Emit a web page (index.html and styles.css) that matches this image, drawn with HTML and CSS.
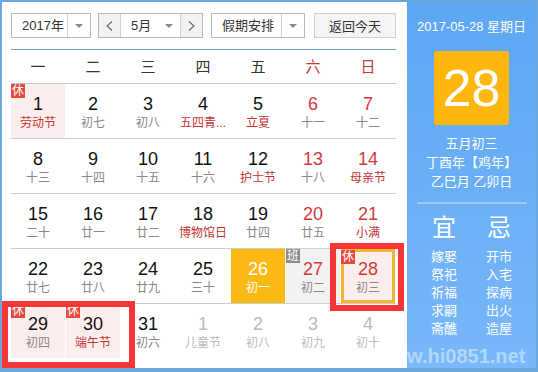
FILE: index.html
```html
<!DOCTYPE html>
<html lang="zh-CN">
<head>
<meta charset="utf-8">
<title>万年历</title>
<link rel="stylesheet" href="styles.css">
</head>
<body>
<div class="cal">
  <div class="main">
    <div class="toolbar">
      <div class="select year"><span class="sel-text">2017年</span><span class="sel-btn"><i class="caret"></i></span></div>
      <div class="month-group">
        <span class="nav"><svg width="7" height="10" viewBox="0 0 7 10"><polyline points="6,0.5 1,5 6,9.5" fill="none" stroke="#666" stroke-width="1.1"/></svg></span>
        <span class="month-sel"><span class="sel-text">5月</span><i class="caret"></i></span>
        <span class="nav"><svg width="7" height="10" viewBox="0 0 7 10"><polyline points="1,0.5 6,5 1,9.5" fill="none" stroke="#666" stroke-width="1.1"/></svg></span>
      </div>
      <div class="select holiday"><span class="sel-text">假期安排</span><span class="sel-btn"><i class="caret"></i></span></div>
      <button class="today-btn">返回今天</button>
    </div>
    <div class="weekdays">
      <span>一</span><span>二</span><span>三</span><span>四</span><span>五</span><span class="we">六</span><span class="we">日</span>
    </div>
    <div class="weeks">
      <div class="week">
        <div class="day rest"><i class="badge">休</i><b>1</b><em class="fest">劳动节</em></div>
        <div class="day"><b>2</b><em>初七</em></div>
        <div class="day"><b>3</b><em>初八</em></div>
        <div class="day"><b>4</b><em class="fest">五四青...</em></div>
        <div class="day"><b>5</b><em class="fest">立夏</em></div>
        <div class="day wkend"><b>6</b><em>十一</em></div>
        <div class="day wkend"><b>7</b><em>十二</em></div>
      </div>
      <div class="week">
        <div class="day"><b>8</b><em>十三</em></div>
        <div class="day"><b>9</b><em>十四</em></div>
        <div class="day"><b>10</b><em>十五</em></div>
        <div class="day"><b>11</b><em>十六</em></div>
        <div class="day"><b>12</b><em class="fest">护士节</em></div>
        <div class="day wkend"><b>13</b><em>十八</em></div>
        <div class="day wkend"><b>14</b><em class="fest">母亲节</em></div>
      </div>
      <div class="week">
        <div class="day"><b>15</b><em>二十</em></div>
        <div class="day"><b>16</b><em>廿一</em></div>
        <div class="day"><b>17</b><em>廿二</em></div>
        <div class="day"><b>18</b><em class="fest">博物馆日</em></div>
        <div class="day"><b>19</b><em>廿四</em></div>
        <div class="day wkend"><b>20</b><em>廿五</em></div>
        <div class="day wkend"><b>21</b><em class="fest">小满</em></div>
      </div>
      <div class="week">
        <div class="day"><b>22</b><em>廿七</em></div>
        <div class="day"><b>23</b><em>廿八</em></div>
        <div class="day"><b>24</b><em>廿九</em></div>
        <div class="day"><b>25</b><em>三十</em></div>
        <div class="day today"><b>26</b><em>初一</em></div>
        <div class="day wkend work"><i class="badge gray">班</i><b>27</b><em>初二</em></div>
        <div class="day wkend rest selected"><i class="badge">休</i><b>28</b><em>初三</em></div>
      </div>
      <div class="week">
        <div class="day rest"><i class="badge">休</i><b>29</b><em>初四</em></div>
        <div class="day rest"><i class="badge">休</i><b>30</b><em class="fest">端午节</em></div>
        <div class="day"><b>31</b><em>初六</em></div>
        <div class="day other"><b>1</b><em>儿童节</em></div>
        <div class="day other"><b>2</b><em>初八</em></div>
        <div class="day other"><b>3</b><em>初九</em></div>
        <div class="day other"><b>4</b><em>初十</em></div>
      </div>
    </div>
  </div>
  <div class="side">
    <div class="side-date">2017-05-28 星期日</div>
    <div class="big-day">28</div>
    <div class="lunar">
      <div>五月初三</div>
      <div>丁酉年【鸡年】</div>
      <div>乙巳月 乙卯日</div>
    </div>
    <div class="sep"></div>
    <div class="yj-head"><span>宜</span><span>忌</span></div>
    <div class="yj-list">
      <span>嫁娶</span><span>开市</span>
      <span>祭祀</span><span>入宅</span>
      <span>祈福</span><span>探病</span>
      <span>求嗣</span><span>出火</span>
      <span>斋醮</span><span>造屋</span>
    </div>
  </div>
  <div class="mark mark-a"></div>
  <div class="mark mark-b"></div>
  <div class="watermark">www.hi0851.net</div>
</div>
</body>
</html>
```

FILE: styles.css
```css
html, body {
  margin: 0;
  padding: 0;
  background: #fff;
}
body {
  font-family: "Liberation Sans", "Noto Sans CJK SC", sans-serif;
  color: #333;
}
.cal {
  position: relative;
  width: 538px;
  height: 372px;
  box-sizing: border-box;
  border: 2px solid #6ba7dc;
  border-bottom-width: 4px;
  display: flex;
  overflow: hidden;
}
.main {
  width: 405px;
  box-sizing: border-box;
  padding: 11px 0 0 9px;
  background: #fff;
}
.toolbar {
  display: flex;
  height: 25px;
  width: 385px;
}
.select {
  display: flex;
  height: 25px;
  box-sizing: border-box;
  border: 1px solid #b9b9b9;
  background: #fff;
}
.sel-text {
  flex: 1;
  padding-left: 10px;
  font-size: 13px;
  line-height: 23px;
  color: #333;
}
.sel-btn {
  width: 23px;
  box-sizing: border-box;
  border-left: 1px solid #d2d2d2;
  display: flex;
  align-items: center;
  justify-content: center;
}
.caret {
  display: block;
  width: 0;
  height: 0;
  border-left: 4px solid transparent;
  border-right: 4px solid transparent;
  border-top: 4px solid #8a8a8a;
}
.year {
  width: 80px;
}
.month-group {
  margin-left: 7px;
  width: 105px;
  height: 25px;
  box-sizing: border-box;
  border: 1px solid #b9b9b9;
  display: flex;
}
.nav {
  width: 21px;
  background: #f3f3f3;
  display: flex;
  align-items: center;
  justify-content: center;
}
.month-sel {
  flex: 1;
  display: flex;
  align-items: center;
  border-left: 1px solid #d2d2d2;
  border-right: 1px solid #d2d2d2;
  background: #fff;
  padding-right: 7px;
}
.holiday {
  margin-left: 8px;
  width: 94px;
}
.today-btn {
  margin: 0 0 0 9px;
  padding: 0;
  width: 82px;
  height: 25px;
  box-sizing: border-box;
  border: 1px solid #cfcfcf;
  background: #f5f5f5;
  font-family: "Liberation Sans", "Noto Sans CJK SC", sans-serif;
  font-size: 13px;
  color: #333;
}
.weekdays {
  margin-top: 11px;
  width: 385px;
  border-top: 1px solid #72a9d9;
  border-bottom: 1px solid #c8c8c8;
  height: 33px;
  display: grid;
  grid-template-columns: repeat(7, 54px);
  column-gap: 1px;
  font-size: 15px;
  line-height: 33px;
  text-align: center;
  color: #333;
}
.weekdays .we {
  color: #c23b3b;
}
.weeks {
  width: 385px;
}
.week {
  display: grid;
  grid-template-columns: repeat(7, 54px);
  column-gap: 1px;
  border-bottom: 1px solid #cdcdcd;
}
.week:last-child {
  border-bottom: none;
}
.day {
  position: relative;
  height: 54px;
  box-sizing: border-box;
  padding-top: 10px;
  text-align: center;
}
.day b {
  display: block;
  font-weight: normal;
  font-size: 18px;
  line-height: 20px;
  color: #111;
}
.day em {
  display: block;
  font-style: normal;
  font-size: 12px;
  line-height: 18px;
  color: #888;
  white-space: nowrap;
}
.day em.fest {
  color: #c23434;
}
.wkend b {
  color: #d4383b;
}
.rest {
  background: #fdeeee;
}
.work {
  background: #f2f2f2;
}
.today {
  background: #fdb913;
}
.today b, .today em {
  color: #fff;
}
.selected {
  border: 3px solid #f5b52e;
  padding-top: 7px;
}
.other b, .other em {
  color: #bbb;
}
.badge {
  position: absolute;
  left: 0;
  top: 0;
  width: 14px;
  height: 14px;
  background: #e8493c;
  color: #fff;
  font-style: normal;
  font-size: 12px;
  line-height: 14px;
  text-align: center;
}
.selected .badge {
  left: -3px;
  top: -2px;
}
.badge.gray {
  background: #8b8b8b;
}
.side {
  flex: 1;
  background: linear-gradient(#5ca7f4, #79b8f9);
  color: #fff;
  text-align: center;
}
.side-date {
  margin-top: 16px;
  font-size: 13px;
  line-height: 18px;
}
.big-day {
  margin: 15px auto 0;
  width: 75px;
  height: 74px;
  border-radius: 3px;
  background: #ffb60f;
  font-size: 52px;
  line-height: 74px;
}
.lunar {
  margin-top: 9px;
  font-size: 13px;
  line-height: 19px;
}
.sep {
  margin: 11px auto 0;
  width: 110px;
  height: 2px;
  background: rgba(255, 255, 255, 0.35);
}
.yj-head, .yj-list {
  display: grid;
  grid-template-columns: 44px 44px;
  column-gap: 11px;
  justify-content: center;
}
.yj-head {
  margin-top: 9px;
  font-size: 24px;
  line-height: 30px;
}
.yj-list {
  margin-top: 5px;
  font-size: 13px;
  line-height: 18px;
}
.mark {
  position: absolute;
  box-sizing: border-box;
  border: 6px solid #f43636;
}
.mark-a {
  left: 328px;
  top: 241px;
  width: 74px;
  height: 68px;
}
.mark-b {
  left: 0;
  top: 299px;
  width: 133px;
  height: 67px;
}
.watermark {
  position: absolute;
  left: 374px;
  top: 344px;
  font-size: 20px;
  line-height: 20px;
  font-weight: bold;
  color: rgba(255, 255, 255, 0.45);
  white-space: nowrap;
}
```
